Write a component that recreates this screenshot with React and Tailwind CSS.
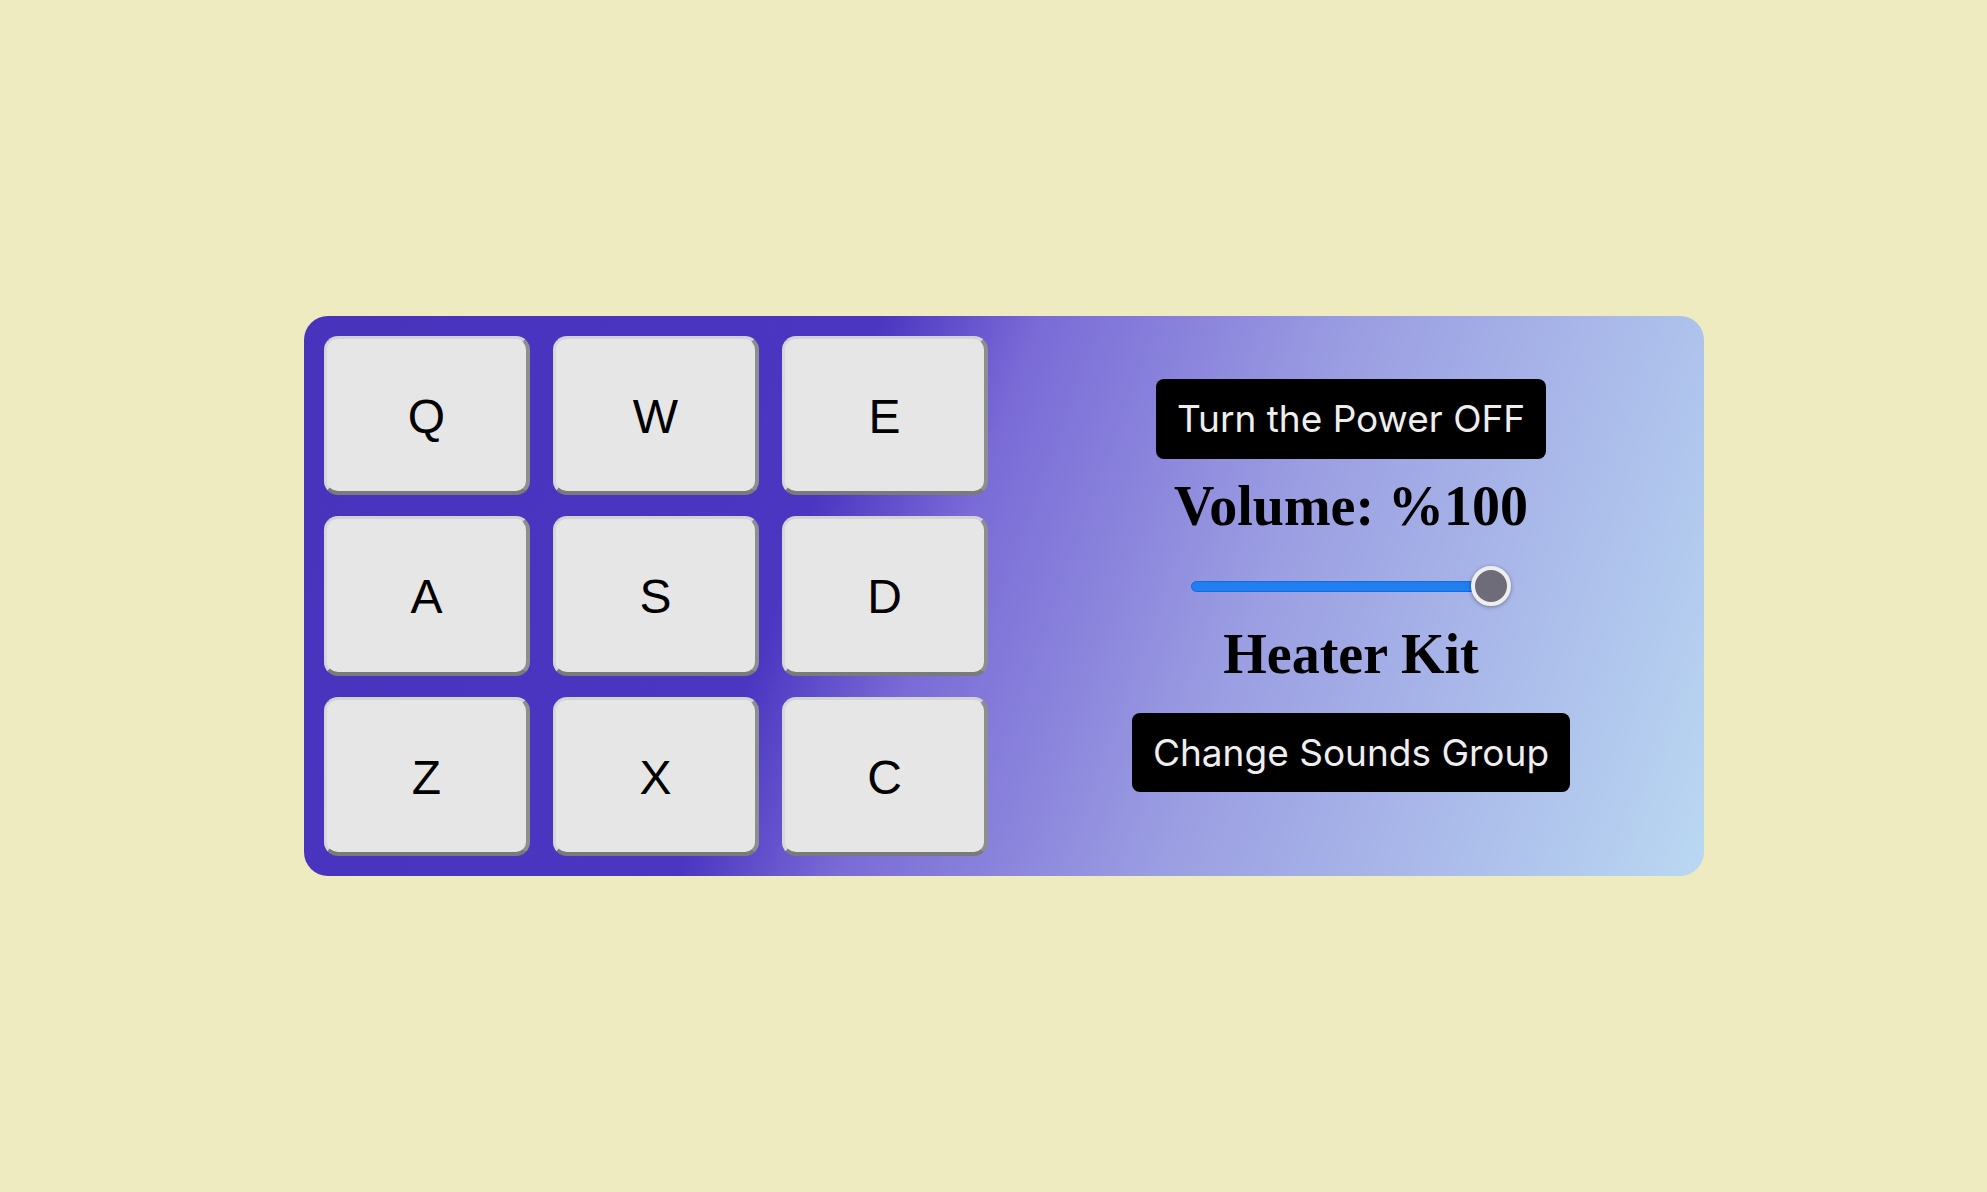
import React, { useState } from 'react';

const KEYS = ['Q', 'W', 'E', 'A', 'S', 'D', 'Z', 'X', 'C'];

const App = () => {
  const [power, setPower] = useState(true);
  const [volume] = useState(100);

  return (
    <div className="min-h-screen w-full bg-[#eeebc1] flex items-center justify-center pl-[21px]">
      <div className="w-[1400px] h-[560px] rounded-[24px] p-[20px] flex bg-[linear-gradient(110deg,#4833bd_0%,#4a36c1_36%,#7a6bd7_46%,#9b9ee2_66%,#bad8f2_100%)]">
        {/* drum pads */}
        <div className="grid grid-cols-[repeat(3,206px)] grid-rows-3 gap-x-[23px] gap-y-[21px]">
          {KEYS.map((k) => (
            <button
              key={k}
              className="rounded-[14px] bg-[#e6e6e6] border-t-[3px] border-l-[3px] border-r-[4px] border-b-[4px] border-t-[#d3d3d6] border-l-[#d8d8da] border-r-[#8e8e8e] border-b-[#7a7a7a] flex items-center justify-center pt-[4px] text-[48px] text-black font-['Liberation_Sans',Arial,sans-serif]"
            >
              {k}
            </button>
          ))}
        </div>

        {/* controls */}
        <div className="flex-1 ml-[30px] flex flex-col items-center pt-[43px]">
          <button
            onClick={() => setPower(!power)}
            className="h-[80px] px-[21px] rounded-[8px] bg-black text-[#eeeeee] text-[37px] font-['Inter','Noto_Sans',sans-serif]"
          >
            Turn the Power {power ? 'OFF' : 'ON'}
          </button>

          <div className="mt-[15px] leading-[64px] text-[56px] font-bold text-black font-['Liberation_Serif','Times_New_Roman',serif]">
            Volume: %{volume}
          </div>

          <div className="mt-[28px] relative w-[320px] h-[40px] flex items-center">
            <div className="w-full h-[11px] rounded-full bg-[#1f7ff0] border border-[#1768d8]" />
            <div className="absolute right-0 top-0 w-[40px] h-[40px] rounded-full bg-[#6d6c78] border-[4px] border-[#eeeeee] shadow-[0_1px_4px_rgba(0,0,0,0.35)]" />
          </div>

          <div className="mt-[16px] leading-[64px] text-[56px] font-bold text-black font-['Liberation_Serif','Times_New_Roman',serif]">
            Heater Kit
          </div>

          <button className="mt-[27px] h-[79px] px-[21px] rounded-[8px] bg-black text-[#eeeeee] text-[37px] font-['Inter','Noto_Sans',sans-serif]">
            Change Sounds Group
          </button>
        </div>
      </div>
    </div>
  );
};

export default App;
